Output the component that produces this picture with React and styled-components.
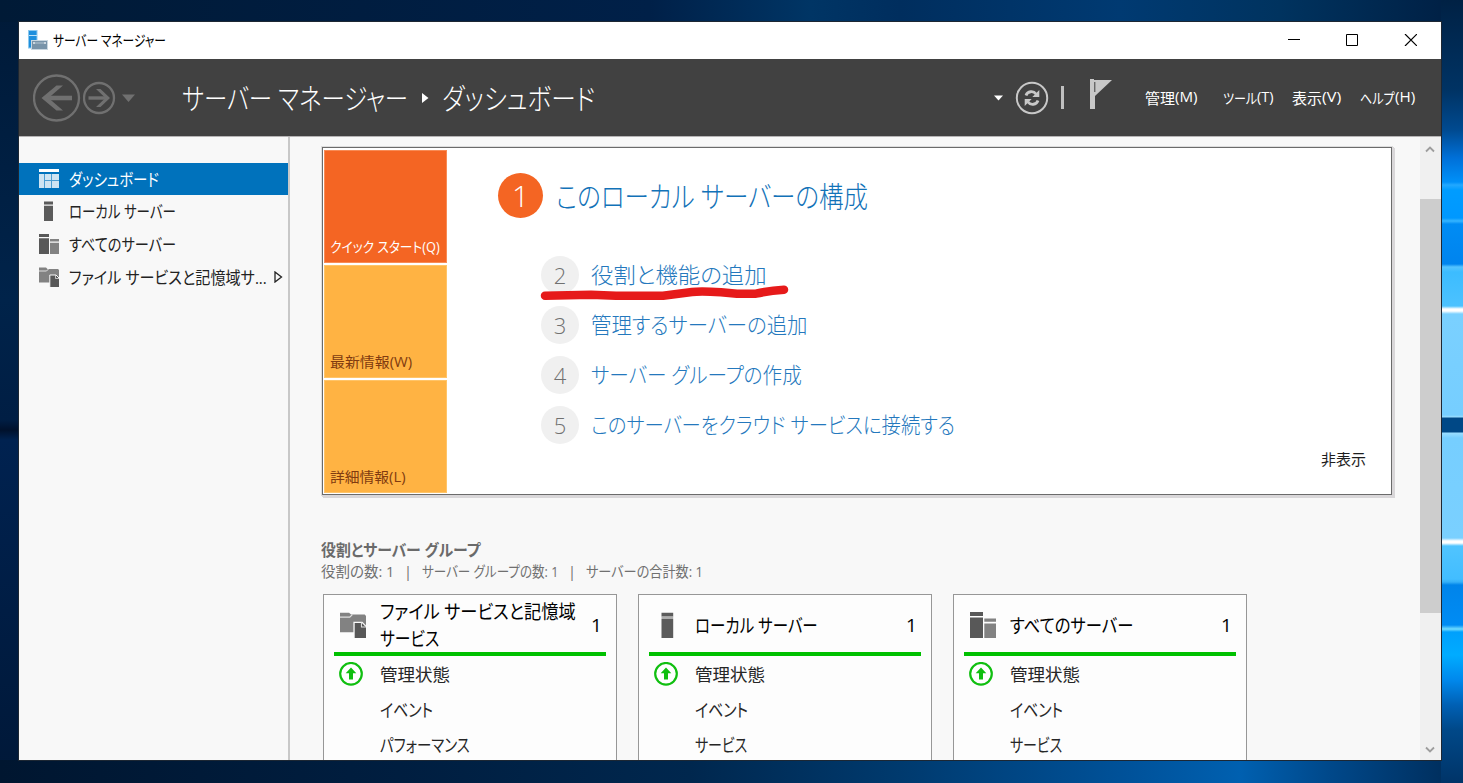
import React, { useLayoutEffect, useRef, useState } from "react";
import styled, { createGlobalStyle } from "styled-components";

const GlobalStyle = createGlobalStyle`
    * {
        box-sizing: border-box;
    }
    body {
        margin: 0;
        overflow: hidden;
        font-family: "Open Sans", "Noto Sans CJK JP", sans-serif;
        font-feature-settings: "palt";
    }
`;

const Desktop = styled.div`
    height: 783px;
    padding: 22px 22px 23px 19px;
    background-color: #00204a;
    background-image:
        linear-gradient(180deg, #002144 0, #003364 90px, #004a90 130px, #0070d8 158px, #0090f8 182px, #22a8ff 185px, #009cff 190px, #0098ff 218px, #35b4ff 221px, #008cf4 224px, #0084ee 264px, #55c4ff 267px, #3cbcff 272px, #4cc2ff 306px, #ffffff 309px, #ffffff 311px, #7ad0ff 314px, #76ceff 415px, #9addff 417px, #004886 418px, #004886 432px, #9addff 433px, #76ceff 438px, #7ad0ff 538px, #ffffff 541px, #ffffff 543px, #50c4ff 546px, #42bdff 579px, #35b0f8 582px, #0084ea 585px, #008cf4 625px, #70dcff 629px, #00a0fc 632px, #00acff 655px, #0088ec 680px, #0060b4 705px, #004888 730px, #003468 783px),
        linear-gradient(90deg, #001a36 0, #001d40 360px, #002048 650px, #003565 810px, #002e5e 900px, #003a72 1120px, #00335f 1280px, #002146 1440px),
        linear-gradient(90deg, #001630 0, #001e40 400px, #00274e 690px, #003a6e 900px, #00529a 1130px, #0060b0 1240px, #00488a 1330px, #003060 1440px),
        linear-gradient(180deg, #001a38 0, #00234a 300px, #001e44 420px, #00112c 430px, #002250 440px, #001838 783px);
    background-repeat: no-repeat;
    background-position: right top, left top, left bottom, left top;
    background-size: 22px 783px, 1441px 22px, 1441px 23px, 19px 783px;
`;

const Window = styled.div`
    display: flex;
    flex-direction: column;
    width: 1422px;
    height: 738px;
    background-color: #f8f8f8;
    box-shadow: 0 0 0 1px #1d2733;
`;

const TitleBar = styled.div`
    display: flex;
    align-items: center;
    height: 37px;
    padding: 0 24px 1px 9px;
    background-color: #ffffff;
    color: #000000;
    font-size: 15px;
    line-height: 20px;
    svg {
        flex: none;
    }
`;

const AppTitle = styled.div`
    flex: 1;
    padding-left: 5px;
`;

const WindowButtons = styled.div`
    display: flex;
    gap: 46px;
`;

const Header = styled.header`
    display: flex;
    align-items: center;
    height: 78px;
    padding: 0 26px 0 14px;
    background-color: #414141;
    border-bottom: 1px solid #b5b3b4;
    color: #ffffff;
    svg {
        flex: none;
    }
`;

const Breadcrumb = styled.div`
    display: flex;
    align-items: center;
    flex: 1;
    padding: 0 0 2px 45px;
    font-size: 29px;
    font-weight: 300;
    svg {
        margin: 2px 13px 0 14px;
    }
`;

const Divider = styled.div`
    width: 3px;
    height: 23px;
    margin: 0 26px 0 12px;
    background-color: #bfbfbf;
`;

const Menu = styled.nav`
    display: flex;
    margin-left: 33px;
    padding-bottom: 1px;
    font-size: 14.5px;
`;

const MenuItem = styled.div`
    display: flex;
    margin-right: ${props => props.after || 0}px;
`;

const Body = styled.div`
    display: flex;
    flex: 1;
    min-height: 0;
`;

const Sidebar = styled.aside`
    width: 271px;
    padding-top: 26px;
    border-right: 2px solid #c8c8c8;
`;

const SidebarItem = styled.div`
    display: flex;
    align-items: center;
    gap: 10px;
    height: ${props => props.active ? 32 : 32.7}px;
    padding-left: 20px;
    background-color: ${props => props.active ? '#0072bc' : 'transparent'};
    color: ${props => props.active ? '#ffffff' : '#222222'};
    font-size: ${props => props.kanji ? 16.5 : 17.5}px;
    svg {
        flex: none;
    }
    span {
        margin-bottom: ${props => props.kanji ? 0 : 1}px;
    }
`;

const Expander = styled.svg`
    margin-left: -3px;
`;

const Main = styled.main`
    flex: 1;
    min-width: 0;
    overflow: hidden;
    padding: 10px 0 0 32px;
`;

const Welcome = styled.section`
    display: flex;
    width: 1070px;
    height: 348px;
    padding: 2px 1px 1px;
    border: 1px solid #6b6b6b;
    background-color: #ffffff;
    box-shadow: 1px 1px 0 1px #d9d7d9, 0 0 0 1px #dddddd, 2px 2px 0 1px #d9d7d9;
`;

const Tiles = styled.div`
    display: flex;
    flex-direction: column;
    gap: 2px;
    width: 123px;
`;

const Tile = styled.div`
    display: flex;
    align-items: flex-end;
    flex: none;
    height: 113px;
    padding: 0 0 5px 5px;
    border: 1px solid ${props => props.active ? '#f88b55' : '#ffc468'};
    background-color: ${props => props.active ? '#f46523' : '#ffb343'};
    color: ${props => props.active ? '#ffffff' : '#813b10'};
    font-size: 14px;
    line-height: 20px;
`;

const Steps = styled.div`
    flex: 1;
    padding: 23px 0 0 51px;
`;

const MainStep = styled.div`
    display: flex;
    align-items: center;
    gap: 13px;
    height: 45px;
    margin-bottom: 32px;
    color: #1272b8;
    font-size: 29px;
    font-weight: 300;
`;

const Step = styled.div`
    display: flex;
    align-items: center;
    gap: 12px;
    height: 50px;
    padding-left: 43px;
    color: #2478bd;
    font-size: 22px;
    font-weight: 300;
`;

const StepText = styled.div`
    padding-bottom: ${props => props.main ? 2 : 5}px;
`;

const StepNumber = styled.div`
    display: flex;
    align-items: center;
    justify-content: center;
    flex: none;
    width: ${props => props.main ? 45 : 38}px;
    height: ${props => props.main ? 45 : 38}px;
    border-radius: 50%;
    background-color: ${props => props.main ? '#f46523' : '#f0f0f0'};
    color: ${props => props.main ? '#ffffff' : '#707070'};
    font-size: ${props => props.main ? 30 : 22}px;
`;

const HideLink = styled.div`
    align-self: flex-end;
    padding: 0 24px 24px 0;
    color: #1e1e1e;
    font-size: 15px;
    line-height: 20px;
`;

const GroupTitle = styled.h2`
    margin: 44px 0 0 -1px;
    color: #6a6a6a;
    font-size: 16px;
    font-weight: 700;
    line-height: 22px;
`;

const GroupInfo = styled.div`
    display: flex;
    margin-left: -1px;
    color: #707070;
    font-size: 14.5px;
    line-height: 22px;
`;

const Separator = styled.span`
    width: 28px;
    text-align: center;
`;

const Cards = styled.div`
    display: flex;
    gap: 21px;
    margin: 11px 0 0 1px;
`;

const Card = styled.article`
    width: 294px;
    height: 230px;
    padding: 0 10px;
    border: 1px solid #979797;
    background-color: #fdfdfd;
`;

const CardHeader = styled.div`
    display: flex;
    align-items: center;
    height: 61px;
    padding: 5px 0 0 6px;
    border-bottom: 4px solid #00c000;
    color: #000000;
    font-size: 19px;
    line-height: 27px;
    svg {
        flex: none;
        margin-top: -3px;
    }
`;

const CardTitle = styled.div`
    flex: 1;
    padding-left: 14px;
`;

const Count = styled.div`
    width: 15px;
    padding-bottom: 1px;
`;

const CardRow = styled.div`
    display: flex;
    align-items: center;
    height: 35px;
    padding-left: 5px;
    color: #262626;
    font-size: ${props => props.kanji ? 17 : 18}px;
`;

const RowIcon = styled.div`
    display: flex;
    width: 41px;
`;

const Scrollbar = styled.div`
    display: flex;
    flex-direction: column;
    align-items: center;
    width: 21px;
    padding: 9px 0 7px;
    background-color: #f0f0f0;
    svg {
        flex: none;
        margin-right: 1px;
    }
`;

const Thumb = styled.div`
    width: 21px;
    height: 414px;
    margin: 46px 0 auto;
    background-color: #cdcdcd;
`;

const FitBox = styled.span`
    display: block;
    white-space: nowrap;
`;

const FitText = styled.span`
    display: inline-block;
    transform-origin: 0 50%;
`;

// narrow UI kana: squeezes a line of text to the given width
const Fit = ({ width, children }) => {
    const ref = useRef(null);
    const [scale, setScale] = useState(1);

    useLayoutEffect(() => {
        setScale(width / ref.current.offsetWidth);
    }, [width, children]);

    return (
        <FitBox style={{ width }}>
            <FitText ref={ref} style={{ transform: `scaleX(${scale})` }}>{children}</FitText>
        </FitBox>
    );
};

const AppIcon = () => (
    <svg width="20" height="20" viewBox="0 0 20 20">
        <rect x="0.5" y="0.5" width="8.5" height="17.5" fill="#1e8fdd" stroke="#8cc8ee" />
        <path d="M1 5.5h8" stroke="#bfe2f7" />
        <rect x="3.5" y="10.5" width="16" height="9" fill="#7893a9" stroke="#c9d6e0" />
        <path d="M5 13h13" stroke="#b4c5d2" />
        <path d="M6 12v2M17 12v2" stroke="#ffffff" />
    </svg>
);

const BackIcon = () => (
    <svg width="48" height="48" viewBox="0 0 48 48" fill="none" stroke="#707070">
        <circle cx="23.5" cy="24" r="22.5" strokeWidth="2.3" />
        <path d="M39 24H12" strokeWidth="4.6" />
        <path d="M30 11.5h-6.5L8.5 24l15 12.5h6.5L15.5 24z" fill="#707070" stroke="none" />
    </svg>
);

const ForwardIcon = () => (
    <svg width="34" height="34" viewBox="0 0 34 34" fill="none" stroke="#707070">
        <circle cx="16" cy="17" r="15" strokeWidth="2.3" />
        <path d="M5.5 17H24" strokeWidth="3.4" />
        <path d="M13 8h4.5L27 17l-9.500 9H13l9.500-9z" fill="#707070" stroke="none" />
    </svg>
);

const RefreshIcon = () => (
    <svg width="34" height="34" viewBox="0 0 34 34" fill="none" stroke="#c8c8c8">
        <circle cx="17" cy="17" r="15.2" strokeWidth="2" />
        <path d="M11 14.5C12.5 10 18.5 9.500 21 13" strokeWidth="2.8" />
        <path d="M23 19.5C21.5 24 15.5 24.5 13 21" strokeWidth="2.8" />
        <path d="M24.3 9V16H17.3z M9.7 25V18H16.7z" fill="#c8c8c8" stroke="none" />
    </svg>
);

const Flag = styled.svg`
    margin-top: -6px;
`;

const FlagIcon = () => (
    <Flag width="22" height="31" viewBox="0 0 22 31">
        <path d="M0 0h4v1h18L5 17v13H0z" fill="#c8c8c8" />
        <path d="M4.8 3v10" stroke="#414141" strokeWidth="1" />
    </Flag>
);

const DashboardIcon = () => (
    <svg width="20" height="20" viewBox="0 0 20 20">
        <path d="M0 0h20v3H0z" fill="#ffffff" />
        <path d="M0 5h20v14H0z" fill="#cfe4f2" />
        <path d="M5.5 5v14M12.5 5v14M5.5 11.5H20" stroke="#4d9dd1" />
    </svg>
);

const ServerIcon = ({ size = 20 }) => (
    <svg width={size} height={size} viewBox="0 0 20 20">
        <path d="M5 0.5h9v3H5z M5 5h9v15H5z" fill="#5b5b5b" />
        <path d="M5 3.5h9v1H5z" fill="#a0a0a0" />
    </svg>
);

const ServersIcon = ({ size = 20 }) => (
    <svg width={size} height={size} viewBox="0 0 20 20">
        <path d="M0 0h10v3H0z M0 4.2h10V20H0z" fill="#585858" />
        <path d="M11 5h9v2.5h-9z M11 8.8h9V20h-9z" fill="#828282" />
    </svg>
);

const FilesIcon = ({ size = 20 }) => (
    <svg width={size} height={size} viewBox="0 0 20 20">
        <path d="M0 0.5h7l1.5 1.5H19l1 1V15.5H0z" fill="#828282" />
        <path d="M0 4h7.5L9.5 2" fill="none" stroke="#e0e0e0" />
        <path d="M10.8 8h6.2l4 4v9H10.8z" fill="#585858" stroke="#fafafa" />
        <path d="M16.5 8v3.5H20" fill="none" stroke="#dddddd" strokeWidth="0.8" />
    </svg>
);

const StatusIcon = () => (
    <svg width="24" height="24" viewBox="0 0 24 24">
        <circle cx="12" cy="11.8" r="10.8" fill="#ffffff" stroke="#10bf10" strokeWidth="2.2" />
        <path d="M12 5.5l5.300 5.8h-3.300V17.5h-4v-6.2H6.700z" fill="#10bf10" />
    </svg>
);

const Arrow = ({ up }) => (
    <svg width="10" height="7" viewBox="0 0 10 7">
        <path d={up ? "M1 5.5L5 1.5L9 5.5" : "M1 1.5L5 5.5L9 1.5"} fill="none" stroke="#9d9d9d" strokeWidth="1.8" />
    </svg>
);

const menu = [
    { label: '管理', width: 30, hotkey: '(M)', keyWidth: 23, after: 25 },
    { label: 'ツール', width: 34, hotkey: '(T)', keyWidth: 17, after: 18 },
    { label: '表示', width: 30, hotkey: '(V)', keyWidth: 19, after: 19 },
    { label: 'ヘルプ', width: 35, hotkey: '(H)', keyWidth: 20 }
];

const steps = [
    { text: '役割と機能の追加', width: 176 },
    { text: '管理するサーバーの追加', width: 217 },
    { text: 'サーバー グループの作成', width: 211 },
    { text: 'このサーバーをクラウド サービスに接続する', width: 364 }
];

const cards = [
    { Icon: FilesIcon, title: [['ファイル サービスと記憶域', 196], ['サービス', 59]], rows: [['イベント', 53], ['パフォーマンス', 90]] },
    { Icon: ServerIcon, title: [['ローカル サーバー', 123]], rows: [['イベント', 53], ['サービス', 52]] },
    { Icon: ServersIcon, title: [['すべてのサーバー', 123]], rows: [['イベント', 53], ['サービス', 52]] }
];

const Underline = styled.svg`
    position: absolute;
    left: 540px;
    top: 284px;
`;

const App = () => (
    <>
        <GlobalStyle />
        <Desktop>
            <Window>
                <TitleBar>
                    <AppIcon />
                    <AppTitle><Fit width={113}>サーバー マネージャー</Fit></AppTitle>
                    <WindowButtons>
                        <svg width="12" height="12"><path d="M0 5.5h12" stroke="#000" /></svg>
                        <svg width="12" height="12"><path d="M0.5 0.5h11v11h-11z" fill="none" stroke="#000" /></svg>
                        <svg width="13" height="12"><path d="M1 0l12 12M13 0l-12 12" stroke="#000" strokeWidth="1.2" /></svg>
                    </WindowButtons>
                </TitleBar>
                <Header>
                    <BackIcon />
                    <svg width="2" height="1" />
                    <ForwardIcon />
                    <svg width="20" height="10"><path d="M5 1.5h13L11.5 9z" fill="#707070" /></svg>
                    <Breadcrumb>
                        <Fit width={226}>サーバー マネージャー</Fit>
                        <svg width="7" height="12"><path d="M0 1v10l6.5-5z" fill="#fff" /></svg>
                        <Fit width={153}>ダッシュボード</Fit>
                    </Breadcrumb>
                    <svg width="21" height="6"><path d="M0 0.5h9L4.5 5.5z" fill="#fff" /></svg>
                    <RefreshIcon />
                    <Divider />
                    <FlagIcon />
                    <Menu>
                        {menu.map(item => (
                            <MenuItem key={item.label} after={item.after}>
                                <Fit width={item.width}>{item.label}</Fit>
                                <Fit width={item.keyWidth}>{item.hotkey}</Fit>
                            </MenuItem>
                        ))}
                    </Menu>
                </Header>
                <Body>
                    <Sidebar>
                        <SidebarItem active>
                            <DashboardIcon />
                            <Fit width={90}>ダッシュボード</Fit>
                        </SidebarItem>
                        <SidebarItem>
                            <ServerIcon />
                            <Fit width={107}>ローカル サーバー</Fit>
                        </SidebarItem>
                        <SidebarItem>
                            <ServersIcon />
                            <Fit width={107}>すべてのサーバー</Fit>
                        </SidebarItem>
                        <SidebarItem kanji>
                            <FilesIcon />
                            <Fit width={198}>ファイル サービスと記憶域サ...</Fit>
                            <Expander width="9" height="12"><path d="M1 1v10l6.5-5z" fill="none" stroke="#222" strokeWidth="1.3" /></Expander>
                        </SidebarItem>
                    </Sidebar>
                    <Main>
                        <Welcome>
                            <Tiles>
                                <Tile active><Fit width={110}>クイック スタート(Q)</Fit></Tile>
                                <Tile><Fit width={82}>最新情報(W)</Fit></Tile>
                                <Tile><Fit width={76}>詳細情報(L)</Fit></Tile>
                            </Tiles>
                            <Steps>
                                <MainStep>
                                    <StepNumber main>1</StepNumber>
                                    <StepText main><Fit width={312}>このローカル サーバーの構成</Fit></StepText>
                                </MainStep>
                                {steps.map((step, i) => (
                                    <Step key={step.text}>
                                        <StepNumber>{i + 2}</StepNumber>
                                        <StepText><Fit width={step.width}>{step.text}</Fit></StepText>
                                    </Step>
                                ))}
                            </Steps>
                            <HideLink>非表示</HideLink>
                        </Welcome>
                        <GroupTitle><Fit width={159}>役割とサーバー グループ</Fit></GroupTitle>
                        <GroupInfo>
                            <Fit width={73}>役割の数: 1</Fit>
                            <Separator>|</Separator>
                            <Fit width={136}>サーバー グループの数: 1</Fit>
                            <Separator>|</Separator>
                            <Fit width={117}>サーバーの合計数: 1</Fit>
                        </GroupInfo>
                        <Cards>
                            {cards.map(({ Icon, title, rows }) => (
                                <Card key={title[0][0]}>
                                    <CardHeader>
                                        <Icon size={26} />
                                        <CardTitle>
                                            {title.map(([text, width]) => (
                                                <Fit key={text} width={width}>{text}</Fit>
                                            ))}
                                        </CardTitle>
                                        <Count>1</Count>
                                    </CardHeader>
                                    <CardRow kanji>
                                        <RowIcon><StatusIcon /></RowIcon>
                                        <Fit width={70}>管理状態</Fit>
                                    </CardRow>
                                    {rows.map(([text, width]) => (
                                        <CardRow key={text}>
                                            <RowIcon />
                                            <Fit width={width}>{text}</Fit>
                                        </CardRow>
                                    ))}
                                </Card>
                            ))}
                        </Cards>
                    </Main>
                    <Scrollbar>
                        <Arrow up />
                        <Thumb />
                        <Arrow />
                    </Scrollbar>
                </Body>
            </Window>
            <Underline width="252" height="18">
                <path d="M5 11.7L51 10.7L76 11.7H123L152 8Q160 6.8 181 8.2L197 9.7H216Q230 6.5 244 5.7" fill="none" stroke="#e61a1a" strokeWidth="8.5" strokeLinecap="round" strokeLinejoin="round" />
            </Underline>
        </Desktop>
    </>
);

export default App;
